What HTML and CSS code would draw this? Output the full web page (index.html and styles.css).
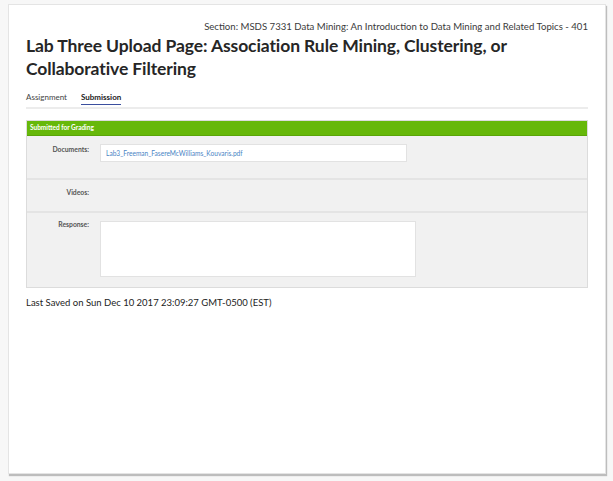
FILE: index.html
```html
<!DOCTYPE html>
<html>
<head>
<meta charset="utf-8">
<link rel="stylesheet" href="styles.css">
</head>
<body>
<div class="card">
  <div class="section">Section: MSDS 7331 Data Mining: An Introduction to Data Mining and Related Topics - 401</div>
  <h1 class="title">Lab Three Upload Page: Association Rule Mining, Clustering, or Collaborative Filtering</h1>
  <div class="tabs">
    <span class="tab">Assignment</span>
    <span class="tab active">Submission</span>
  </div>
  <div class="panel">
    <div class="status">Submitted for Grading</div>
    <div class="row row-docs">
      <div class="label">Documents:</div>
      <div class="docbox"><a class="doclink">Lab3_Freeman_FasereMcWilliams_Kouvaris.pdf</a></div>
    </div>
    <div class="row row-videos">
      <div class="label">Videos:</div>
    </div>
    <div class="row row-resp">
      <div class="label">Response:</div>
      <div class="textarea"></div>
    </div>
  </div>
  <div class="saved">Last Saved on Sun Dec 10 2017 23:09:27 GMT-0500 (EST)</div>
</div>
</body>
</html>
```
FILE: styles.css
```css
html, body {
  margin: 0;
  padding: 0;
  background: #f7f7f7;
}
body {
  padding: 4px 7px 7px 8px;
  font-family: Lato, "Open Sans", sans-serif;
  color: #222;
}
.card {
  background: #fff;
  width: 598px;
  height: 470px;
  box-sizing: border-box;
  border: 1px solid #e4e4e4;
  box-shadow: 1px 2px 1px #bdbdbd;
  padding: 16px 17px 0 17px;
}
.section {
  text-align: right;
  font-size: 9.6px;
  color: #3a3a3a;
  line-height: 12px;
}
.title {
  margin: 2px 0 0 0;
  font-size: 17.5px;
  font-weight: 700;
  line-height: 22.5px;
  color: #262626;
  letter-spacing: -0.1px;
}
.tabs {
  margin-top: 9px;
  display: flex;
  gap: 14px;
  border-bottom: 2px solid #ececec;
  height: 18px;
}
.tab {
  font-size: 8px;
  color: #444;
  line-height: 14px;
  padding-top: 1px;
}
.tab.active {
  font-weight: 700;
  color: #222;
  border-bottom: 1.5px solid #3b4f9e;
  height: 16px;
  box-sizing: border-box;
  padding-top: 1px;
}
.panel {
  margin-top: 11px;
  border: 1px solid #dcdcdc;
  background: #f1f1f1;
}
.status {
  background: #66b80a;
  border-bottom: 1px solid #5aa508;
  color: #fff;
  font-size: 6.5px;
  font-weight: 700;
  line-height: 14px;
  height: 14px;
  padding-left: 3px;
}
.row {
  display: flex;
  align-items: flex-start;
  border-top: 2px solid #e4e4e4;
  box-sizing: border-box;
}
.row-docs { border-top: none; height: 42px; padding-top: 8px; }
.row-videos { height: 33px; padding-top: 8px; }
.row-resp { height: 76px; padding-top: 8px; }
.label {
  width: 62px;
  text-align: right;
  font-size: 6.8px;
  font-weight: 700;
  color: #555;
  line-height: 10px;
}
.docbox {
  margin-left: 11px;
  width: 307px;
  height: 18px;
  box-sizing: border-box;
  background: #fff;
  border: 1px solid #e2e2e2;
  padding-left: 5px;
  font-size: 6.6px;
  line-height: 16px;
}
.doclink {
  color: #4a84c4;
}
.textarea {
  margin-left: 11px;
  width: 316px;
  height: 56px;
  box-sizing: border-box;
  background: #fff;
  border: 1px solid #e2e2e2;
}
.row-resp .label { margin-top: -2px; }
.row-videos .label { margin-top: -1px; }
.saved {
  margin-top: 9px;
  font-size: 9.5px;
  color: #222;
  line-height: 12px;
}
```
